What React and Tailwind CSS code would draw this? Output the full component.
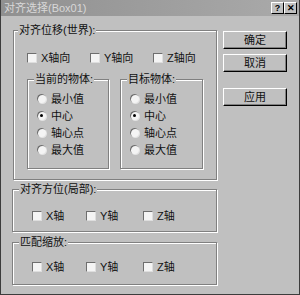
const font = "font-['Liberation_Sans','Noto_Sans_CJK_SC',sans-serif]";

function GroupBox({ label, labelLeft = "left-[4px]", className = "", children }) {
  return (
    <div
      className={`relative border border-[#808080] shadow-[inset_1px_1px_0_#ffffff,1px_1px_0_#ffffff] ${className}`}
    >
      <span
        className={`absolute -top-[7px] ${labelLeft} bg-[#c0c0c0] px-px text-[11px] leading-[12px] text-[#111]`}
      >
        {label}
      </span>
      {children}
    </div>
  );
}

function Check({ label, width }) {
  return (
    <div className={`flex items-center gap-[4px] ${width}`}>
      <span className="h-[10px] w-[10px] border border-t-[#6e6e6e] border-l-[#6e6e6e] border-r-[#dedede] border-b-[#dedede] bg-[#f4f4f4]" />
      <span className="text-[11px] leading-[12px] text-[#111]">{label}</span>
    </div>
  );
}

function Radio({ label, checked }) {
  return (
    <div className="flex h-[17px] items-center gap-[5px]">
      <span className="flex h-[9px] w-[9px] items-center justify-center rounded-full bg-[#f4f4f4] shadow-[inset_1px_1px_0_#6e6e6e,1px_1px_0_#e4e4e4]">
        {checked && <span className="h-[3px] w-[3px] rounded-full bg-black" />}
      </span>
      <span className="text-[11px] leading-[12px] text-[#111]">{label}</span>
    </div>
  );
}

function Button({ children, className = "" }) {
  return (
    <button
      className={`h-[18px] w-[64px] border border-t-white border-l-white border-r-black border-b-black bg-[#c0c0c0] text-[11px] leading-[12px] text-[#111] shadow-[inset_-1px_-1px_0_#808080] ${className}`}
    >
      {children}
    </button>
  );
}

const targets = ["最小值", "中心", "轴心点", "最大值"];

export default function App() {
  return (
    <div className={`flex h-[295px] w-[300px] flex-col border-x border-b border-[#3c3c3c] bg-[#c0c0c0] ${font}`}>
      {/* title bar */}
      <div className="flex h-[16px] items-center bg-gradient-to-r from-[#909090] to-[#aaaaaa] pl-[3px] pr-[2px]">
        <span className="text-[11px] leading-[12px] text-[#d8d8d8]">对齐选择(Box01)</span>
        <div className="ml-auto flex">
          {["?", "✕"].map((g) => (
            <span
              key={g}
              className="flex h-[12px] w-[13px] items-center justify-center border border-t-white border-l-white border-r-black border-b-black bg-[#c0c0c0] text-[9px] font-bold leading-none text-black"
            >
              {g}
            </span>
          ))}
        </div>
      </div>

      <div className="flex">
        {/* left column */}
        <div className="flex w-[218px] flex-col pl-[11px]">
          <GroupBox label="对齐位移(世界):" className="ml-px mt-[14px] h-[150px] w-[204px]">
            <div className="flex pl-[13px] pt-[21px]">
              <Check label="X轴向" width="w-[63px]" />
              <Check label="Y轴向" width="w-[63px]" />
              <Check label="Z轴向" width="w-[60px]" />
            </div>
            <div className="mt-[15px] flex gap-[11px] pl-[13px]">
              {["当前的物体:", "目标物体:"].map((t, i) => (
                <GroupBox
                  key={t}
                  label={t}
                  labelLeft="left-[6px]"
                  className={`h-[90px] ${i === 0 ? "w-[82px]" : "w-[83px]"}`}
                >
                  <div className="flex flex-col pl-[9px] pt-[10px]">
                    {targets.map((r) => (
                      <Radio key={r} label={r} checked={r === "中心"} />
                    ))}
                  </div>
                </GroupBox>
              ))}
            </div>
          </GroupBox>

          <GroupBox label="对齐方位(局部):" labelLeft="left-[6px]" className="mt-[9px] h-[43px] w-[205px]">
            <div className="flex pl-[19px] pt-[20px]">
              <Check label="X轴" width="w-[54px]" />
              <Check label="Y轴" width="w-[57px]" />
              <Check label="Z轴" width="w-[50px]" />
            </div>
          </GroupBox>

          <GroupBox label="匹配缩放:" labelLeft="left-[6px]" className="mt-[10px] h-[43px] w-[205px]">
            <div className="flex pl-[19px] pt-[18px]">
              <Check label="X轴" width="w-[54px]" />
              <Check label="Y轴" width="w-[57px]" />
              <Check label="Z轴" width="w-[50px]" />
            </div>
          </GroupBox>
        </div>

        {/* right column */}
        <div className="ml-[4px] flex flex-col">
          <Button className="mt-[15px]">确定</Button>
          <Button className="mt-[5px]">取消</Button>
          <Button className="mt-[16px]">应用</Button>
        </div>
      </div>
    </div>
  );
}
